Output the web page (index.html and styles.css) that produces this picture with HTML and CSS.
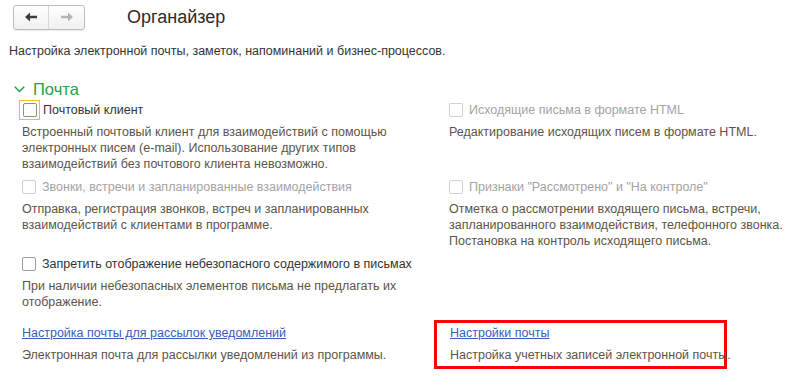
FILE: index.html
```html
<!DOCTYPE html>
<html lang="ru">
<head>
<meta charset="utf-8">
<title>Органайзер</title>
<link rel="stylesheet" href="styles.css">
</head>
<body>
<div class="page">
  <header class="topbar">
    <div class="nav">
      <button class="nav-btn back" aria-label="Назад">
        <svg width="12" height="10" viewBox="0 0 12 10"><path d="M0 5 L5 0.5 L5 3.8 L12 3.8 L12 6.2 L5 6.2 L5 9.5 Z" fill="#3c3c3c"/></svg>
      </button>
      <button class="nav-btn fwd" aria-label="Вперёд">
        <svg width="12" height="10" viewBox="0 0 12 10"><path d="M12 5 L7 0.5 L7 3.8 L0 3.8 L0 6.2 L7 6.2 L7 9.5 Z" fill="#b4b4b4"/></svg>
      </button>
    </div>
    <h1 class="title">Органайзер</h1>
  </header>
  <p class="subtitle">Настройка электронной почты, заметок, напоминаний и бизнес-процессов.</p>

  <div class="group-head">
    <svg class="chev" width="11" height="7" viewBox="0 0 11 7"><path d="M0.8 0.8 L5.5 5.5 L10.2 0.8" fill="none" stroke="#23a04b" stroke-width="1.5"/></svg>
    <span class="group-title">Почта</span>
  </div>

  <div class="grid">
    <div class="item">
      <label class="check focused">
        <span class="focus"><span class="box"></span></span>
        <span class="label">Почтовый клиент</span>
      </label>
      <p class="desc">Встроенный почтовый клиент для взаимодействий с помощью электронных писем (e-mail). Использование других типов взаимодействий без почтового клиента невозможно.</p>
    </div>
    <div class="item">
      <label class="check disabled">
        <span class="box"></span>
        <span class="label">Исходящие письма в формате HTML</span>
      </label>
      <p class="desc">Редактирование исходящих писем в формате HTML.</p>
    </div>

    <div class="item">
      <label class="check disabled">
        <span class="box"></span>
        <span class="label">Звонки, встречи и запланированные взаимодействия</span>
      </label>
      <p class="desc">Отправка, регистрация звонков, встреч и запланированных взаимодействий с клиентами в программе.</p>
    </div>
    <div class="item">
      <label class="check disabled">
        <span class="box"></span>
        <span class="label">Признаки "Рассмотрено" и "На контроле"</span>
      </label>
      <p class="desc">Отметка о рассмотрении входящего письма, встречи, запланированного взаимодействия, телефонного звонка. Постановка на контроль исходящего письма.</p>
    </div>

    <div class="item">
      <label class="check">
        <span class="box"></span>
        <span class="label">Запретить отображение небезопасного содержимого в письмах</span>
      </label>
      <p class="desc">При наличии небезопасных элементов письма не предлагать их отображение.</p>
    </div>
    <div class="item"></div>

    <div class="item link-item">
      <a class="link" href="#">Настройка почты для рассылок уведомлений</a>
      <p class="desc">Электронная почта для рассылки уведомлений из программы.</p>
    </div>
    <div class="item link-item highlighted">
      <a class="link" href="#">Настройки почты</a>
      <p class="desc">Настройка учетных записей электронной почты.</p>
    </div>
  </div>
</div>
</body>
</html>
```

FILE: styles.css
```css
* { box-sizing: border-box; }
html, body { margin: 0; padding: 0; background: #fff; }
body {
  font-family: "Liberation Sans", Arial, sans-serif;
  font-size: 12.5px;
  color: #333;
  width: 800px;
  height: 385px;
  overflow: hidden;
}
.page { padding: 4px 0 0 0; }

.topbar { display: flex; align-items: center; height: 26px; }
.nav {
  display: flex;
  margin-left: 13px;
  border: 1px solid #bdbdbd;
  border-radius: 3px;
  background: linear-gradient(#ffffff, #f0f0f0);
  box-shadow: 0 1px 1px rgba(0,0,0,0.08);
  height: 25px;
}
.nav-btn {
  width: 35px;
  height: 23px;
  border: 0;
  background: transparent;
  padding: 0;
  display: flex;
  align-items: center;
  justify-content: center;
}
.nav-btn.back { border-right: 1px solid #d6d6d6; }
.title {
  margin: 0 0 0 42px;
  font-weight: normal;
  font-size: 18px;
  color: #2b2b2b;
  line-height: 24px;
}
.subtitle {
  margin: 13px 0 0 9px;
  font-size: 12.5px;
  line-height: 16px;
  color: #333;
}

.group-head {
  display: flex;
  align-items: center;
  margin: 21px 0 0 14px;
  height: 18px;
}
.chev { margin-right: 8px; margin-top: 1px; }
.group-title { font-size: 16.5px; color: #23a04b; line-height: 18px; }

.grid {
  display: grid;
  grid-template-columns: 427px 1fr;
  row-gap: 7px;
  margin: 4px 0 0 22px;
}

.check { display: flex; align-items: center; height: 16px; }
.box {
  width: 14px;
  height: 14px;
  border: 1px solid #9a9a9a;
  border-radius: 2px;
  background: #fff;
  flex: none;
}
.focus {
  display: flex;
  align-items: center;
  justify-content: center;
  width: 21px;
  height: 20px;
  margin: -2px 0 -2px -3px;
  border: 1px solid #f0c020;
  flex: none;
}
.focus .box { border-color: #8e8e8e; }
.check .label { margin-left: 6px; color: #333; line-height: 16px; }
.check.focused .label { margin-left: 3px; }
.check.disabled .box { border-color: #d2d2d2; }
.check.disabled .label { color: #a3a3a3; }

.desc {
  margin: 6px 0 0 0;
  line-height: 16px;
  color: #5e5446;
  max-width: 400px;
}

.link-item { margin-top: 8px; }
.link {
  display: block;
  line-height: 16px;
  color: #3a5bbf;
  text-decoration: underline;
}
.highlighted {
  margin-left: -15px;
  margin-top: 3px;
  width: 293px;
  padding: 2px 0 3px 13px;
  border: 3px solid #ff0000;
}
.highlighted .desc { max-width: none; white-space: nowrap; }
```
